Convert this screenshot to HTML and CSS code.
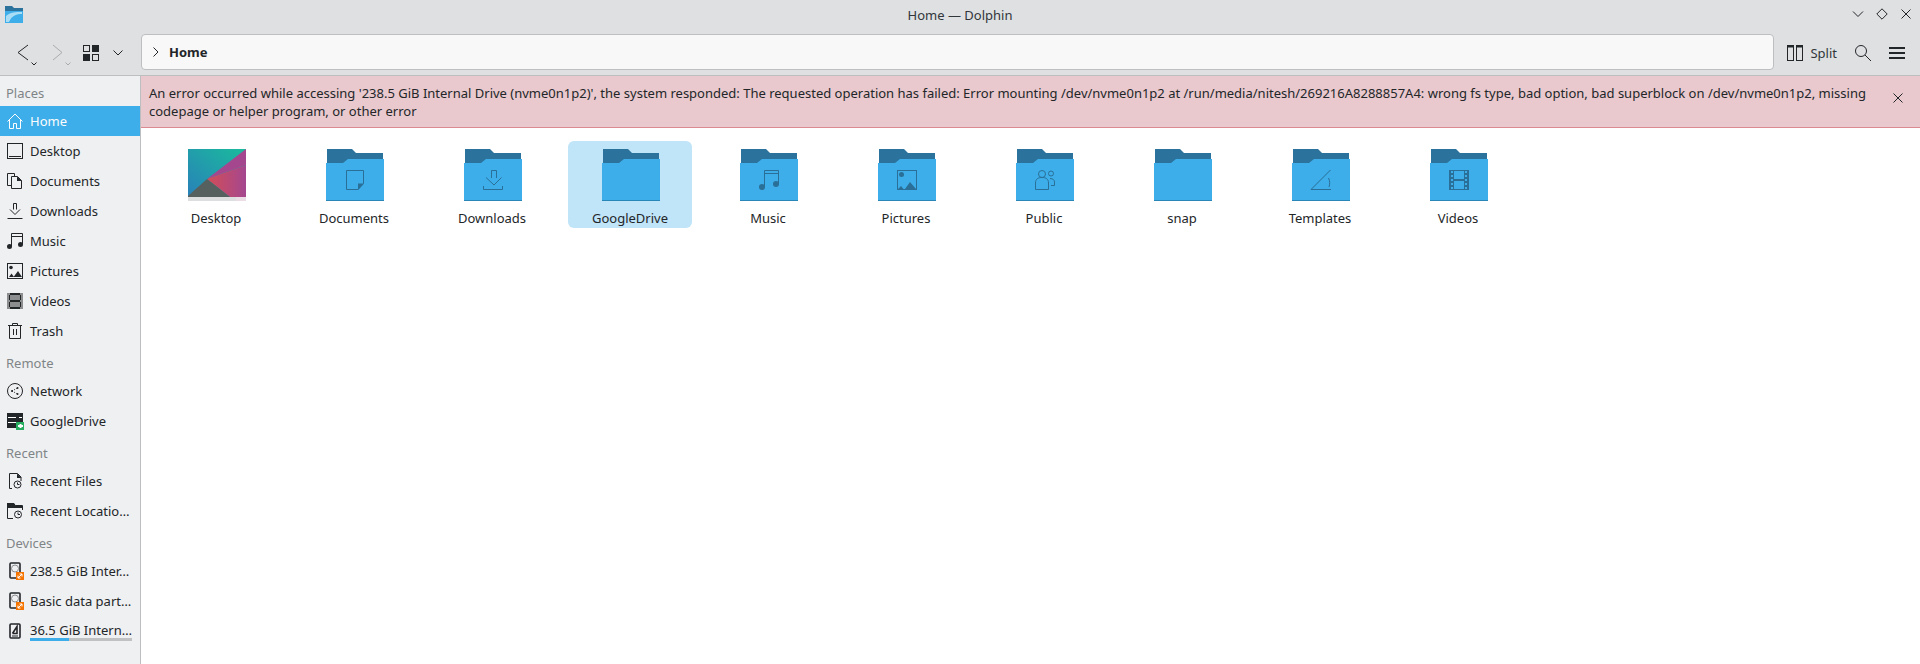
FILE: index.html
```html
<!DOCTYPE html>
<html lang="en">
<head>
	<meta charset="UTF-8">
	<title>Home — Dolphin</title>
	<link rel="stylesheet" href="styles.css">
</head>
<body>
	<svg class="sprite" width="0" height="0">
		<defs>
			<symbol id="folder" viewBox="0 0 58 52">
				<path d="M1 0H26L30 4H57V20H1Z" fill="#2b739d"/>
				<path d="M0 14H17L22 10H58V52H0Z" fill="#3daee9"/>
				<rect x="0" y="51" width="58" height="1" fill="#2b86b8"/>
			</symbol>
			<symbol id="drive" viewBox="0 0 18 18">
				<rect class="thick" x="3" y="1" width="10" height="15" rx="1"/>
				<circle class="faint" cx="8" cy="6.5" r="3.5"/>
				<rect x="9" y="10" width="8" height="8" fill="#f67400" stroke="none"/>
				<path class="gap" d="M11 16L15 12M12.5 12H15V14.5M11 13.5V16H13.5"/>
			</symbol>
			<linearGradient id="wall" x1="1" y1="0" x2="0" y2="1">
				<stop offset="0" stop-color="#1abc9c"/>
				<stop offset="1" stop-color="#2980b9"/>
			</linearGradient>
			<linearGradient id="rose" x1="0" y1="0" x2="1" y2="0">
				<stop offset="0" stop-color="#d24d57"/>
				<stop offset="1" stop-color="#a5478f"/>
			</linearGradient>
		</defs>
	</svg>

	<header class="titlebar">
		<svg class="app-icon" width="18" height="17" viewBox="0 0 18 17">
			<path d="M0 0H7L9 2H18V17H0Z" fill="#2b739d"/>
			<path d="M0 5H18V17H0Z" fill="#3daee9"/>
			<path d="M1 10C5 6 11 6 17 6V8C12 8 7 9 4 16H1Z" fill="#a9dcf5"/>
		</svg>
		<span class="title">Home — Dolphin</span>
		<div class="win-buttons">
			<svg width="12" height="12" viewBox="0 0 12 12"><path d="M1 3.5L6 8.5L11 3.5"/></svg>
			<svg width="12" height="12" viewBox="0 0 12 12"><path d="M6 .8L11.2 6L6 11.2L.8 6Z"/></svg>
			<svg width="12" height="12" viewBox="0 0 12 12"><path d="M1.5 1.5L10.5 10.5M10.5 1.5L1.5 10.5"/></svg>
		</div>
	</header>

	<div class="toolbar">
		<div class="nav-buttons">
			<span class="nav-btn">
				<svg width="26" height="26" viewBox="0 0 26 26"><path d="M16 4L6 11.5L16 19"/><path d="M19.5 21.5L22 24L24.5 21.5"/></svg>
			</span>
			<span class="nav-btn off">
				<svg width="26" height="26" viewBox="0 0 26 26"><path d="M7 4L16 11.5L7 19"/><path d="M19.5 21.5L22 24L24.5 21.5"/></svg>
			</span>
			<span class="view-btn">
				<svg width="16" height="16" viewBox="0 0 16 16">
					<rect x=".5" y=".5" width="6" height="6"/>
					<rect class="solid" x="9" y="0" width="7" height="7"/>
					<rect class="solid" x="0" y="9" width="7" height="7"/>
					<rect x="9.5" y="9.5" width="6" height="6"/>
				</svg>
				<svg class="view-arrow" width="10" height="6" viewBox="0 0 10 6"><path d="M.5 .5L5 5L9.5 .5"/></svg>
			</span>
		</div>
		<div class="address">
			<svg width="6" height="10" viewBox="0 0 6 10"><path d="M.5 .5L5 5L.5 9.5"/></svg>
			<b>Home</b>
		</div>
		<div class="tools">
			<span class="split">
				<svg width="16" height="16" viewBox="0 0 16 16">
					<rect x=".5" y=".5" width="6" height="15"/>
					<rect x="9.5" y=".5" width="6" height="15"/>
					<path class="bar" d="M0 1.5H7M9 1.5H16"/>
				</svg>
				Split
			</span>
			<svg width="16" height="16" viewBox="0 0 16 16"><circle cx="6" cy="6" r="5.5"/><path d="M10 10L16 16"/></svg>
			<svg width="16" height="12" viewBox="0 0 16 12"><path class="bar" d="M0 1H16M0 6H16M0 11H16"/></svg>
		</div>
	</div>

	<div class="main">
		<nav class="places">
			<div class="group">Places</div>
			<a class="place active">
				<svg viewBox="0 0 16 16"><path d="M.5 8.5L8 1L15.5 8.5M2.5 6.5V15.5H6.5V10.5H9.5V15.5H13.5V6.5"/></svg>Home
			</a>
			<a class="place">
				<svg viewBox="0 0 16 16"><rect x=".5" y=".5" width="15" height="15"/><path d="M2 13.5H14"/></svg>Desktop
			</a>
			<a class="place">
				<svg viewBox="0 0 16 16"><path d="M4.5 12.5H.5V.5H7.5V3"/><path d="M4.5 3.5H10.5L14.5 7.5V15.5H4.5Z"/><path class="fill" d="M10 3.5L15 8H10Z"/></svg>Documents
			</a>
			<a class="place">
				<svg viewBox="0 0 16 16"><path d="M6.5 6.5V.5H9.5V6.5M3 6.5L8 11.5L13 6.5M.5 15.5H15.5"/></svg>Downloads
			</a>
			<a class="place">
				<svg viewBox="0 0 16 16"><path d="M4.5 13V.5H15.5V11M4.5 3.5H15.5"/><circle class="fill" cx="2.5" cy="13.5" r="2.5"/><circle class="fill" cx="13.5" cy="11.5" r="2.5"/></svg>Music
			</a>
			<a class="place">
				<svg viewBox="0 0 16 16"><rect x=".5" y=".5" width="15" height="15"/><circle class="fill" cx="4" cy="4.5" r="1.8"/><path class="fill" d="M2 14L4.5 10.5L7 14ZM6.5 14L11 8L15 14Z"/></svg>Pictures
			</a>
			<a class="place">
				<svg viewBox="0 0 16 16"><rect class="frame" x="0" y="0" width="16" height="16"/><path class="fill" d="M2 0H14V2H2ZM2 7H14V9H2ZM2 14H14V16H2ZM2 0V16H3V0ZM13 0V16H14V0Z"/></svg>Videos
			</a>
			<a class="place">
				<svg viewBox="0 0 16 16"><path d="M1 2.5H15M5.5 2.5V.5H10.5V2.5M2.5 2.5V15.5H13.5V2.5M6.5 6V12M9.5 6V12"/></svg>Trash
			</a>

			<div class="group">Remote</div>
			<a class="place">
				<svg viewBox="0 0 16 16"><circle cx="8" cy="8" r="7.5"/><path d="M5 8L10.5 5M5 8L10.5 11" stroke-dasharray="1 1.5"/><circle class="fill" cx="5" cy="8" r="1"/><circle class="fill" cx="10.5" cy="5" r="1"/><circle class="fill" cx="10.5" cy="11" r="1"/></svg>Network
			</a>
			<a class="place">
				<svg viewBox="0 0 16 16">
					<path class="fill" d="M0 0H16V15H0Z"/>
					<path class="gap" d="M1 4.5H9M12 4.5H15M1 9.5H9"/>
					<rect x="9" y="9" width="8" height="8" fill="#27ae60" stroke="none"/>
					<path class="plug" d="M11 13H16M13.5 11V15"/>
				</svg>GoogleDrive
			</a>

			<div class="group">Recent</div>
			<a class="place">
				<svg viewBox="0 0 16 16"><path d="M5 15.5H2.5V.5H10.5L14 4V8"/><path class="fill" d="M10 .5L14.5 5H10Z"/><circle class="punch" cx="10.5" cy="11.5" r="3.5"/><path d="M10.5 9.5V11.5H12.5"/></svg>Recent Files
			</a>
			<a class="place">
				<svg viewBox="0 0 16 16"><path d="M6 15.5H.5V.5H6.5L8.5 2.5H15.5V7"/><path class="fill" d="M0 0H7L9 3H16V5H0Z"/><circle class="punch" cx="11" cy="11.5" r="3.5"/><path d="M11 9.5V11.5H13"/></svg>Recent Locatio…
			</a>

			<div class="group">Devices</div>
			<a class="place">
				<svg viewBox="0 0 18 18" class="drive-icon"><use href="#drive"/></svg>238.5 GiB Inter…
			</a>
			<a class="place">
				<svg viewBox="0 0 18 18" class="drive-icon"><use href="#drive"/></svg>Basic data part…
			</a>
			<a class="place mounted">
				<svg viewBox="0 0 16 16"><rect class="thick" x="3" y="1" width="10" height="14" rx="1"/><path class="thick" d="M5.5 10.5L10 3.5V10.5H5.5"/><path d="M5 13H11"/></svg>
				<span class="mount">
					36.5 GiB Intern…
					<span class="usage"><span class="used" style="width: 38%"></span></span>
				</span>
			</a>
		</nav>

		<section class="pane">
			<div class="banner">
				<p>An error occurred while accessing '238.5 GiB Internal Drive (nvme0n1p2)', the system responded: The requested operation has failed: Error mounting /dev/nvme0n1p2 at /run/media/nitesh/269216A8288857A4: wrong fs type, bad option, bad superblock on /dev/nvme0n1p2, missing<br>codepage or helper program, or other error</p>
				<svg class="banner-close" width="10" height="10" viewBox="0 0 10 10"><path d="M.5 .5L9.5 9.5M9.5 .5L.5 9.5"/></svg>
			</div>
			<div class="files">
				<div class="file">
					<svg class="thumb" viewBox="0 0 58 52">
						<rect width="58" height="48" fill="url(#wall)"/>
						<path d="M58 0L19 30L58 16Z" fill="#a5478f"/>
						<path d="M19 30L58 16V48H42Z" fill="url(#rose)"/>
						<path d="M0 47L19 30L42 48H0Z" fill="#56605f"/>
						<rect y="48" width="58" height="4" fill="#dcdedf"/>
						<rect x="48" y="48" width="10" height="4" fill="#ecdce6"/>
					</svg>
					<span>Desktop</span>
				</div>
				<div class="file">
					<svg class="thumb" viewBox="0 0 58 52"><use href="#folder"/><path class="mark" d="M20.5 21.5H37.5V34.5L32 40.5H20.5Z"/><path class="mark-fill" d="M32 34.5H38L32 41Z"/></svg>
					<span>Documents</span>
				</div>
				<div class="file">
					<svg class="thumb" viewBox="0 0 58 52"><use href="#folder"/><path class="mark" d="M27.5 29V21.5H32.5V29M22 28.5L30 36L37.5 28.5M19.5 37V40.5H38.5V37"/></svg>
					<span>Downloads</span>
				</div>
				<div class="file selected">
					<svg class="thumb" viewBox="0 0 58 52"><use href="#folder"/></svg>
					<span>GoogleDrive</span>
				</div>
				<div class="file">
					<svg class="thumb" viewBox="0 0 58 52"><use href="#folder"/><path class="mark" d="M24.5 37V21.5H38.5V35M24.5 24.5H38.5"/><circle class="mark-fill" cx="22" cy="38" r="3"/><circle class="mark-fill" cx="36" cy="35" r="3"/></svg>
					<span>Music</span>
				</div>
				<div class="file">
					<svg class="thumb" viewBox="0 0 58 52"><use href="#folder"/><rect class="mark" x="19.5" y="21.5" width="19" height="19"/><circle class="mark-fill" cx="23.5" cy="25.5" r="2.5"/><path class="mark-fill" d="M20 40L23 37L25.5 40ZM27 40L32 33L38 40Z"/></svg>
					<span>Pictures</span>
				</div>
				<div class="file">
					<svg class="thumb" viewBox="0 0 58 52"><use href="#folder"/><circle class="mark" cx="26" cy="25" r="3.5"/><circle class="mark" cx="35" cy="24.5" r="2.5"/><path class="mark" d="M19.5 40.5V34C19.5 30 22 28.5 26 28.5C30 28.5 32.5 30 32.5 34V40.5ZM34 29.5C37 29.5 38.5 31 38.5 33V36.5H35"/></svg>
					<span>Public</span>
				</div>
				<div class="file">
					<svg class="thumb" viewBox="0 0 58 52"><use href="#folder"/></svg>
					<span>snap</span>
				</div>
				<div class="file">
					<svg class="thumb" viewBox="0 0 58 52"><use href="#folder"/><path class="mark" d="M38.5 21L19 40.5H39M36.5 29C38 32 38 35 37 38"/></svg>
					<span>Templates</span>
				</div>
				<div class="file">
					<svg class="thumb" viewBox="0 0 58 52"><use href="#folder"/><rect class="mark" x="19.5" y="21.5" width="19" height="19"/><path class="mark-fill" d="M20 21H24V41H20ZM34 21H38V41H34ZM24 30H34V32H24Z"/><path class="holes" d="M22 22V40M36 22V40"/></svg>
					<span>Videos</span>
				</div>
			</div>
		</section>
	</div>
</body>
</html>
```

FILE: styles.css
```css
*{margin: 0;padding: 0;box-sizing: border-box;}
html,body{height: 100%;}
body{
	background: #dee0e2;
	color: #232629;
	font: 13px/18px "Noto Sans", sans-serif;
	overflow: hidden;
	display: flex;
	flex-direction: column;
}
svg{fill: none;stroke: #232629;stroke-width: 1;flex: none;}
.sprite{position: absolute;}

/* title bar */
.titlebar{
	height: 30px;
	position: relative;
	display: flex;
	align-items: center;
	justify-content: center;
}
.app-icon{position: absolute;left: 5px;top: 6px;stroke: none;}
.title{color: #31363b;}
.win-buttons{
	position: absolute;
	right: 8px;
	top: 8px;
	display: flex;
	gap: 12px;
}

/* toolbar */
.toolbar{
	height: 46px;
	display: flex;
	align-items: center;
	border-bottom: 1px solid #bcbebf;
	padding-right: 15px;
}
.nav-buttons{
	width: 141px;
	display: flex;
	align-items: center;
	padding-left: 12px;
}
.nav-btn{width: 34px;height: 26px;margin-top: 2px;}
.nav-btn.off svg{stroke: #a9abad;}
.view-btn{display: flex;align-items: center;gap: 14px;margin-left: 3px;}
.view-btn .solid{fill: #232629;stroke: none;}
.view-btn .view-arrow{margin-top: 1px;}
.address{
	flex: 1;
	height: 36px;
	background: #f8f8f8;
	border: 1px solid #bcbebf;
	border-radius: 4px;
	display: flex;
	align-items: center;
	gap: 10px;
	padding-left: 11px;
	margin-bottom: 1px;
}
.address b{font-weight: 700;}
.tools{
	display: flex;
	align-items: center;
	gap: 18px;
	padding-left: 13px;
}
.split{display: flex;align-items: center;gap: 7px;color: #31363b;}
.bar{stroke-width: 2;}

/* places panel */
.main{flex: 1;display: flex;min-height: 0;}
.places{
	width: 141px;
	background: #eff0f2;
	border-right: 1px solid #bcbebf;
	flex: none;
}
.group{
	height: 30px;
	padding: 8px 0 0 6px;
	color: #7f8587;
}
.place{
	height: 30px;
	display: flex;
	align-items: center;
	gap: 7px;
	padding-left: 7px;
	white-space: nowrap;
}
.place svg{width: 16px;height: 16px;overflow: visible;}
.place .drive-icon{width: 18px;height: 18px;margin-right: -2px;}
.fill{fill: #232629;stroke: none;}
.frame{fill: #8b8d8f;stroke: none;}
.thick{stroke: #232629;stroke-width: 1.6;fill: none;}
.faint{stroke: #8b8d8f;fill: none;}
.gap{stroke: #fff;fill: none;}
.plug{stroke: #fff;stroke-width: 2;}
.punch{fill: #eff0f2;}
.place.active{background: #3daee9;color: #fcfcfc;}
.place.active svg{stroke: #fcfcfc;}
.mount{display: flex;flex-direction: column;margin-top: -1px;}
.usage{
	display: block;
	width: 102px;
	height: 3px;
	background: #bfc1c3;
	margin-top: -1px;
}
.used{display: block;height: 100%;background: #3daee9;}

/* error banner */
.pane{flex: 1;background: #fff;min-width: 0;}
.banner{
	height: 52px;
	background: #e9c9cd;
	border-bottom: 1px solid #da8a90;
	display: flex;
	align-items: center;
	justify-content: space-between;
	padding: 0 17px 0 8px;
}
.banner-close{margin-bottom: 7px;}

/* file grid */
.files{
	display: flex;
	padding: 13px 0 0 13px;
}
.file{
	width: 124px;
	height: 87px;
	margin-right: 14px;
	border-radius: 6px;
	padding-top: 8px;
	display: flex;
	flex-direction: column;
	align-items: center;
}
.file span{margin-top: 8px;}
.file.selected{background: #c0e4f8;}
.thumb{width: 58px;height: 52px;stroke: none;margin-left: 2px;}
.mark{fill: none;stroke: #2a6f97;}
.mark-fill{fill: #2a6f97;stroke: none;}
.holes{stroke: #3daee9;stroke-width: 2;stroke-dasharray: 2 2;fill: none;}
```
